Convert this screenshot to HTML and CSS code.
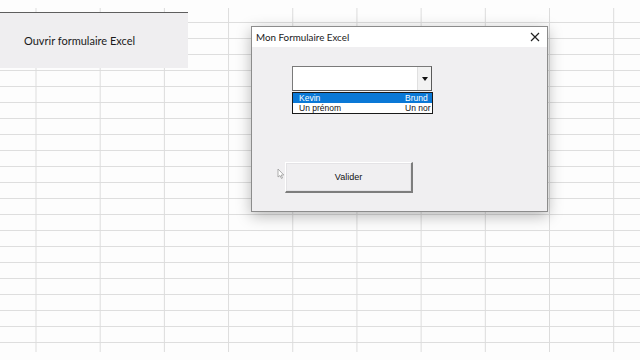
FILE: index.html
```html
<!DOCTYPE html>
<html lang="fr">
<head>
<meta charset="utf-8">
<title>Mon Formulaire Excel</title>
<link rel="stylesheet" href="styles.css">
</head>
<body>
<div class="screen">
  <div class="sheet"></div>
  <div class="open-btn">Ouvrir formulaire Excel</div>

  <div class="dialog">
    <div class="titlebar">
      <span class="title">Mon Formulaire Excel</span>
      <svg class="close" width="10" height="10" viewBox="0 0 10 10"><path d="M1 1 L9 9 M9 1 L1 9" stroke="#222" stroke-width="1.2"/></svg>
    </div>
    <div class="body">
      <div class="combo">
        <div class="combo-field"></div>
        <div class="combo-arrow"><svg width="6" height="4" viewBox="0 0 6 4"><path d="M0 0 H6 L3 4 Z" fill="#111"/></svg></div>
      </div>
      <div class="list">
        <div class="row selected"><span class="c1">Kevin</span><span class="c2">Brund</span></div>
        <div class="row"><span class="c1">Un prénom</span><span class="c2">Un nor</span></div>
      </div>
      <div class="validate">Valider</div>
    </div>
  </div>

  <svg class="cursor" width="8" height="12" viewBox="0 0 8 12"><path d="M1 1 L1 9 L3 7.5 L4.5 10.5 L5.5 10 L4.2 7 L6.8 7 Z" fill="#fff" stroke="#999" stroke-width="0.8"/></svg>
</div>
</body>
</html>
```

FILE: styles.css
```css
html, body {
  margin: 0;
  padding: 0;
}
body {
  width: 640px;
  height: 360px;
  overflow: hidden;
  background: #fdfdfd;
  font-family: Lato, "Noto Sans", sans-serif;
}
.screen {
  position: relative;
  width: 640px;
  height: 360px;
}
.sheet {
  position: absolute;
  left: 0;
  top: 8px;
  width: 640px;
  height: 344px;
  background-color: #fdfdfd;
  background-image:
    linear-gradient(to right, #dcdcdc 0, #dcdcdc 1px, transparent 1px),
    linear-gradient(to bottom, #dedede 0, #dedede 1px, transparent 1px);
  background-size: 64.2px 344px, 640px 16px;
  background-position: 35.5px 0, 0 14px;
  background-repeat: repeat-x, repeat-y;
}
.open-btn {
  position: absolute;
  left: 0;
  top: 12px;
  width: 188px;
  height: 56px;
  box-sizing: border-box;
  border-top: 1px solid #5e5e5e;
  background: #efeef0;
  padding-left: 24px;
  display: flex;
  align-items: center;
  font-size: 11px;
  color: #1a1a1a;
}
.dialog {
  position: absolute;
  left: 251px;
  top: 26px;
  width: 297px;
  height: 186px;
  box-sizing: border-box;
  border: 1px solid #8c8c8c;
  background: #f0eff1;
  box-shadow: 0 4px 14px rgba(0, 0, 0, 0.28);
  display: flex;
  flex-direction: column;
}
.titlebar {
  height: 20px;
  background: #ffffff;
  display: flex;
  align-items: center;
  justify-content: space-between;
  padding: 0 7px 0 4px;
  flex: none;
}
.title {
  font-size: 9.8px;
  color: #1a1a1a;
}
.close {
  display: block;
}
.body {
  flex: 1;
  display: flex;
  flex-direction: column;
  padding: 19px 0 0 40px;
}
.combo {
  width: 140px;
  height: 25px;
  box-sizing: border-box;
  border: 1px solid #7a7a7a;
  border-right-color: #5a5a5a;
  border-bottom-color: #5a5a5a;
  background: #ffffff;
  display: flex;
}
.combo-field {
  flex: 1;
}
.combo-arrow {
  width: 13px;
  background: #f2f2f2;
  border-left: 1px solid #e0e0e0;
  display: flex;
  align-items: center;
  justify-content: center;
}
.combo-arrow svg {
  display: block;
}
.list {
  margin-top: 1px;
  width: 141px;
  height: 22px;
  box-sizing: border-box;
  border: 1px solid #1a1a1a;
  background: #ffffff;
  overflow: hidden;
  font-family: "Liberation Sans", Arial, sans-serif;
  font-size: 8.5px;
}
.row {
  height: 10px;
  line-height: 10px;
  display: flex;
  white-space: nowrap;
  overflow: hidden;
  color: #111;
}
.row.selected {
  background: #0a78d6;
  color: #ffffff;
}
.c1 {
  width: 106px;
  padding-left: 6px;
  flex: none;
}
.c2 {
  flex: none;
}
.validate {
  margin-top: 48px;
  margin-left: -7px;
  width: 128px;
  height: 31px;
  box-sizing: border-box;
  border-top: 1px solid #ffffff;
  border-left: 1px solid #ffffff;
  border-right: 2px solid #7d7d7d;
  border-bottom: 2px solid #7d7d7d;
  box-shadow: inset 0 0 0 1px #e4e3e6;
  background: #f0eff1;
  display: flex;
  align-items: center;
  justify-content: center;
  font-family: "Liberation Sans", Arial, sans-serif;
  font-size: 9px;
  color: #111;
}
.cursor {
  position: absolute;
  left: 277px;
  top: 168px;
}
```
